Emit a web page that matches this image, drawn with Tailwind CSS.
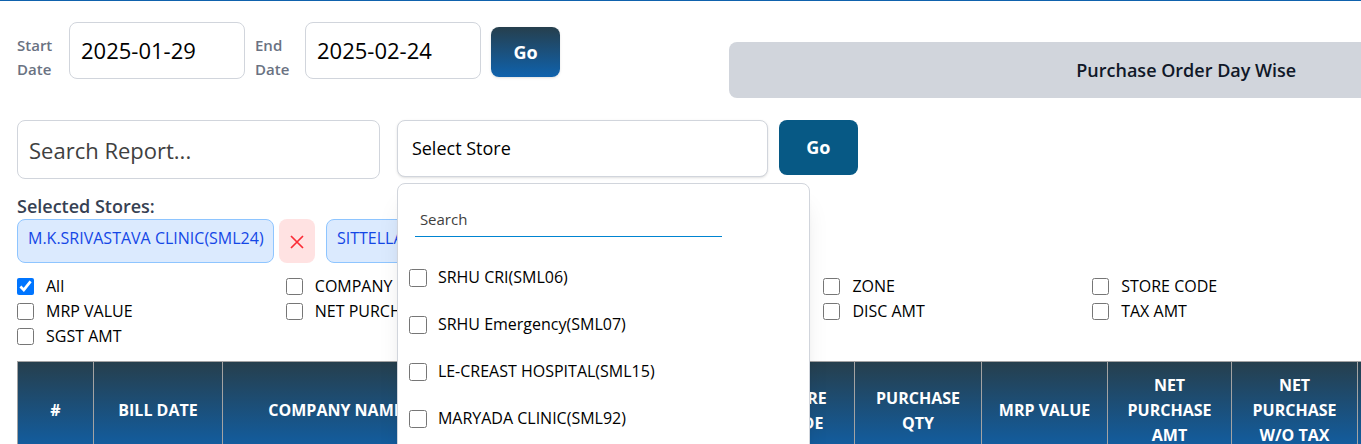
<!DOCTYPE html>
<html lang="en">
<head>
<meta charset="utf-8">
<meta name="viewport" content="width=device-width, initial-scale=1">
<title>Purchase Order Day Wise</title>
<script src="https://cdn.jsdelivr.net/npm/@tailwindcss/browser@4"></script>
</head>
<body class="bg-white text-black font-['Segoe_UI','Open_Sans',sans-serif] text-[16px] leading-[25px]">
<main class="h-screen overflow-hidden border-t border-[#0f62ad] pl-[17px]">

  <header class="flex items-end pt-[18px]">
    <form class="flex w-[53%] shrink-0 items-center gap-[10px]">
      <label for="start" class="w-[42px] pt-[14px] text-[15px] font-semibold leading-6 text-gray-500">Start Date</label>
      <input id="start" type="text" value="2025-01-29" class="h-[57px] w-[176px] rounded-lg border border-gray-300 px-[11px] text-[22px]">
      <label for="end" class="w-10 pt-[14px] text-[15px] font-semibold leading-6 text-gray-500">End Date</label>
      <input id="end" type="text" value="2025-02-24" class="h-[57px] w-[176px] rounded-lg border border-gray-300 px-[11px] text-[22px]">
      <button type="button" class="mt-1 h-[50px] w-[69px] rounded-lg bg-linear-to-b/srgb from-[#263f4d] to-[#0f62ad] text-[18px] font-bold text-white shadow-sm">Go</button>
    </form>
    <h1 class="-mb-[17px] w-[68%] shrink-0 rounded-lg bg-gray-300 py-4 text-center text-[18px] font-semibold leading-6 text-gray-900">Purchase Order Day Wise</h1>
  </header>

  <section class="flex items-start pt-[39px]">
    <input type="text" aria-label="Search Report" placeholder="Search Report..." class="mr-[17px] h-[59px] w-[27%] rounded-lg border border-gray-300 px-[11px] text-[22px] placeholder:text-[#404040]">
    <div class="relative mr-[11px] w-[28%] max-w-[371px]">
      <button type="button" aria-expanded="true" aria-controls="stores" class="h-[57px] w-full rounded-lg border border-gray-300 bg-white px-[14px] text-left text-[18px] shadow-sm">Select Store</button>
      <div id="stores" class="absolute left-0 top-[63px] z-10 w-[413px] rounded-lg border border-gray-300 bg-white px-[11px] pb-10 pt-[17px] shadow-xl">
        <input type="text" aria-label="Search stores" placeholder="Search" class="ml-[6px] block h-[36px] w-[307px] border-b border-b-sky-600 px-[5px] text-[15px] placeholder:text-[#404040]">
        <div class="flex flex-col gap-[22px] pt-7">
          <label class="flex items-center gap-[11px]"><input type="checkbox" class="size-[18px]">SRHU CRI(SML06)</label>
          <label class="flex items-center gap-[11px]"><input type="checkbox" class="size-[18px]">SRHU Emergency(SML07)</label>
          <label class="flex items-center gap-[11px]"><input type="checkbox" class="size-[18px]">LE-CREAST HOSPITAL(SML15)</label>
          <label class="flex items-center gap-[11px]"><input type="checkbox" class="size-[18px]">MARYADA CLINIC(SML92)</label>
        </div>
      </div>
    </div>
    <button type="button" class="h-[55px] w-[79px] rounded-lg bg-[#075985] text-[18px] font-bold text-white">Go</button>
  </section>

  <section class="pt-[14px]">
    <h2 class="text-[18px] font-semibold leading-[26px] text-gray-700">Selected Stores:</h2>
    <div class="flex">
      <span class="h-11 w-[257px] whitespace-nowrap rounded-lg border border-blue-300 bg-blue-100 px-[10px] pt-[6px] text-blue-700">M.K.SRIVASTAVA CLINIC(SML24)</span>
      <button type="button" aria-label="Remove store" class="ml-[5px] mr-[11px] flex h-11 w-9 items-center justify-center rounded-lg bg-red-100 pt-[2px] text-red-500">
        <svg class="size-[14px]" viewBox="0 0 14 14" fill="none" stroke="currentColor" stroke-width="1.7"><path d="M1 1L13 13M13 1L1 13"/></svg>
      </button>
      <span class="h-11 whitespace-nowrap rounded-lg border border-blue-300 bg-blue-100 px-[10px] pt-[6px] text-blue-700">SITTELLA</span>
    </div>
  </section>

  <section class="grid grid-cols-5 pt-[11px]">
    <label class="flex items-center gap-3"><input type="checkbox" checked class="size-[17px]">All</label>
    <label class="flex items-center gap-3"><input type="checkbox" class="size-[17px]">COMPANY</label>
    <label class="col-start-4 flex items-center gap-3"><input type="checkbox" class="size-[17px]">ZONE</label>
    <label class="flex items-center gap-3"><input type="checkbox" class="size-[17px]">STORE CODE</label>
    <label class="flex items-center gap-3"><input type="checkbox" class="size-[17px]">MRP VALUE</label>
    <label class="flex items-center gap-3"><input type="checkbox" class="size-[17px]">NET PURCHASE</label>
    <label class="col-start-4 flex items-center gap-3"><input type="checkbox" class="size-[17px]">DISC AMT</label>
    <label class="flex items-center gap-3"><input type="checkbox" class="size-[17px]">TAX AMT</label>
    <label class="flex items-center gap-3"><input type="checkbox" class="size-[17px]">SGST AMT</label>
  </section>

  <table class="mt-3 w-[109%] table-fixed border-collapse">
    <colgroup>
      <col class="w-[76px]"><col class="w-[129px]"><col class="w-[226px]"><col class="w-[300px]"><col class="w-[106px]"><col class="w-[127px]"><col class="w-[126px]"><col class="w-[124px]"><col class="w-[126px]"><col>
    </colgroup>
    <thead>
      <tr class="h-[98px] bg-linear-to-b/srgb from-[#263f4d] to-[#0f62ad] text-white">
        <th class="border border-[#a3a3a3] font-bold">#</th>
        <th class="border border-[#a3a3a3] font-bold">BILL DATE</th>
        <th class="border border-[#a3a3a3] font-bold">COMPANY NAME</th>
        <th class="border border-[#a3a3a3] font-bold"></th>
        <th class="border border-[#a3a3a3] px-4 font-bold">STORE CODE</th>
        <th class="border border-[#a3a3a3] px-4 font-bold">PURCHASE QTY</th>
        <th class="border border-[#a3a3a3] font-bold">MRP VALUE</th>
        <th class="border border-[#a3a3a3] px-4 font-bold">NET PURCHASE AMT</th>
        <th class="border border-[#a3a3a3] px-4 font-bold">NET PURCHASE W/O TAX</th>
        <th class="border border-[#a3a3a3] font-bold"></th>
      </tr>
    </thead>
  </table>
</main>
</body>
</html>
